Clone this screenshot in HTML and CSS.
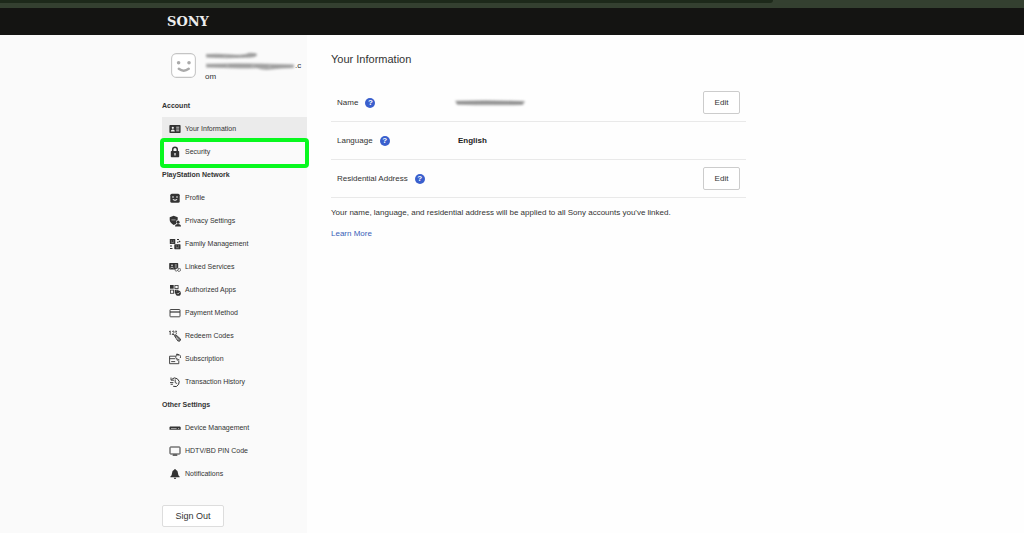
FILE: index.html
```html
<!DOCTYPE html>
<html lang="en">
<head>
<meta charset="utf-8">
<title>Your Information</title>
<meta name="viewport" content="width=device-width, initial-scale=1">
<link rel="stylesheet" href="styles.css">
</head>
<body>
<div class="browser-strip"><div class="browser-tab"></div></div>
<header class="top-bar"><a class="brand" href="#">SONY</a></header>
<div class="layout">
  <aside class="sidebar">
    <div class="user">
      <svg class="avatar" viewBox="0 0 24 24" aria-hidden="true"><rect x=".6" y=".6" width="22.8" height="22.8" rx="4.5" fill="#fff" stroke="#c4c4c4"/><circle cx="7.3" cy="9.4" r="1.7" fill="#aaa"/><circle cx="17.3" cy="9.4" r="1.7" fill="#aaa"/><path d="M7.500 15.200q4.700 3.600 9.500 0" fill="none" stroke="#aaa" stroke-width="2.400" stroke-linecap="round"/></svg>
      <div class="user-text">
        <svg class="smudge smudge-name" viewBox="0 0 54 8" aria-hidden="true"><path d="M1 2Q14 1.200 27 2.400T44 .800Q53 .600 52 3.200T40 5.800Q20 6.800 1 5.600Z" fill="#a8a8a8"/><path d="M3 3.800h15M22 4h12M36 4.200l14-1.400" stroke="#989898" stroke-width="1.400"/></svg>
        <div class="user-mail"><svg class="smudge smudge-mail" viewBox="0 0 90 8" aria-hidden="true"><path d="M1 1.800Q26 1 56 1.600T89 2.400V6Q76 6.400 67 7.600T52 6.200Q26 6.800 1 5.600Z" fill="#acacac"/><path d="M3 3.700h18M24 3.600h22M50 4h13M66 4.600h20" stroke="#989898" stroke-width="1.600"/></svg><span>.c</span></div>
        <div class="user-rest">om</div>
      </div>
    </div>
    <nav class="nav">
      <h2 class="nav-title">Account</h2>
      <a class="nav-item current" href="#"><svg class="icon" viewBox="0 0 12 12"><rect x=".4" y="2" width="11.2" height="8" rx=".8" fill="#333"/><circle cx="3.8" cy="4.8" r="1.1" fill="#eee"/><path d="M1.8 8.6q0-2.2 2-2.2t2 2.2z" fill="#eee"/><path d="M7.2 4.2h3M7.2 6h3M7.2 7.8h3" stroke="#eee" stroke-width=".8"/></svg>Your Information</a>
      <a class="nav-item marked" href="#"><svg class="icon" viewBox="0 0 12 12"><rect x="1.8" y="5" width="8.4" height="6.2" rx=".7" fill="#333"/><path d="M3.7 5.500V3.600a2.300 2.300 0 0 1 4.600 0v1.900" fill="none" stroke="#333" stroke-width="1.500"/><path d="M6 7v2.400" stroke="#fff" stroke-width="1.200"/></svg>Security</a>
      <h2 class="nav-title">PlayStation Network</h2>
      <a class="nav-item" href="#"><svg class="icon" viewBox="0 0 12 12"><rect x="1.3" y="1.8" width="9.400" height="9" rx="1.500" fill="#333"/><circle cx="4" cy="5" r=".8" fill="#fff"/><circle cx="8" cy="5" r=".8" fill="#fff"/><path d="M3.800 7.500q2.200 1.600 4.400 0" fill="none" stroke="#fff"/></svg>Profile</a>
      <a class="nav-item" href="#"><svg class="icon" viewBox="0 0 12 12"><path d="M4.700.800l4 1.400v2.600L7 6v3L4.700 10Q.700 7.600.700 5V2.200z" fill="#333"/><path d="M2.400 4.900h4.200" stroke="#ccc" stroke-width=".7"/><circle cx="9" cy="7.200" r="1.600" fill="#333"/><path d="M6 11.600q0-2.700 3-2.700t3 2.700z" fill="#333"/></svg>Privacy Settings</a>
      <a class="nav-item" href="#"><svg class="icon" viewBox="0 0 12 12"><rect x=".8" y="1" width="5.500" height="5" rx=".6" fill="#333"/><rect x="5.300" y="6.200" width="6.200" height="5" rx=".6" fill="#333"/><path d="M2 3h1M4 3h1M2.200 4.700h2.600M6.800 8h1M9 8h1M7 9.800h2.800" stroke="#aaa" stroke-width=".7"/><path d="M8 1.500h2M9.800 2.800l1.400 1.200M8 4.200h1.500M1 8h2M1 10.500h2.500" stroke="#333" stroke-width="1.100"/></svg>Family Management</a>
      <a class="nav-item" href="#"><svg class="icon" viewBox="0 0 12 12"><rect x=".2" y="2" width="9" height="6.500" rx=".7" fill="#333"/><circle cx="3" cy="4.200" r=".8" fill="#fff"/><path d="M1.500 7q1.500-2 3 0M5.800 4h2M5.800 6h2" fill="none" stroke="#fff" stroke-width=".7"/><g fill="#fafafa" stroke="#555" stroke-width=".8"><rect x="6.200" y="7.400" width="3.800" height="2.300" rx="1.100" transform="rotate(-30 8 9)"/><rect x="8.600" y="8" width="3.300" height="2.300" rx="1.100" transform="rotate(-30 10 9)"/></g></svg>Linked Services</a>
      <a class="nav-item" href="#"><svg class="icon" viewBox="0 0 12 12"><rect x="1" y="1" width="3.700" height="3.700" fill="#333"/><rect x="5.900" y="1.400" width="3.200" height="3.200" fill="none" stroke="#333" stroke-width=".8"/><rect x="1.400" y="6.100" width="3.200" height="3.200" fill="none" stroke="#333" stroke-width=".8"/><path d="M5.700 5.800h3.600v1H7v2.600H5.700z" fill="#333"/><circle cx="9.200" cy="9.200" r="2.600" fill="#333"/><path d="M8 9.200l.900.900 1.600-1.800" fill="none" stroke="#fff" stroke-width=".7"/></svg>Authorized Apps</a>
      <a class="nav-item" href="#"><svg class="icon" viewBox="0 0 12 12"><rect x="1" y="2.500" width="10" height="7.300" rx=".6" fill="none" stroke="#333" stroke-width=".9"/><path d="M1 5h10" stroke="#333" stroke-width="1.200"/></svg>Payment Method</a>
      <a class="nav-item" href="#"><svg class="icon" viewBox="0 0 12 12"><path d="M.2 1.700l1-.8v4M3.200 1.600q1-1 1.800-.3T3.200 4.500h2.200M6.200 1.200h1.400L6.800 2.400q1 .4.600 1.300" fill="none" stroke="#333" stroke-width=".9"/><path d="M5.300 5.500l1.500-.8 4.600 4.200q.6 1.600-1 2.300l-1.600-.3z" fill="#777" stroke="#333" stroke-width=".9"/><path d="M7 7.500l2.500 2.300" stroke="#fff" stroke-width=".7"/></svg>Redeem Codes</a>
      <a class="nav-item" href="#"><svg class="icon" viewBox="0 0 12 12"><path d="M6.800 3.200H.6v7.500h9.200V7.400" fill="none" stroke="#333" stroke-width=".9"/><path d="M.6 5.700h5.800M2.200 8.600h4" stroke="#333" stroke-width=".9"/><path d="M7.800 5.800A2.400 2.400 0 1 1 11.300 5M7 1.300h2v1.800M10.300 6.400L8 7.200V5.300" fill="none" stroke="#333" stroke-width=".9"/></svg>Subscription</a>
      <a class="nav-item" href="#"><svg class="icon" viewBox="0 0 12 12"><path d="M2.600 3.500A4.300 4.300 0 1 1 4.200 10.300" fill="none" stroke="#333"/><path d="M2 1.500v2.700h3M6.200 3.400v3.200l2 1M1 6.600h3.400M1.600 8.300h2.300" fill="none" stroke="#333" stroke-width=".9"/></svg>Transaction History</a>
      <h2 class="nav-title">Other Settings</h2>
      <a class="nav-item" href="#"><svg class="icon" viewBox="0 0 12 12"><path d="M1 4.600h10l.7.800v2.400H.5V5.400z" fill="#333"/><path d="M2 6.500h5.600M9 6.500h1.200" stroke="#ccc" stroke-width=".7"/></svg>Device Management</a>
      <a class="nav-item" href="#"><svg class="icon" viewBox="0 0 12 12"><rect x="1" y="2" width="10" height="7" rx=".5" fill="none" stroke="#333"/><path d="M4 9.500h4l.5 1.300h-5z" fill="#333"/></svg>HDTV/BD PIN Code</a>
      <a class="nav-item" href="#"><svg class="icon" viewBox="0 0 12 12"><path d="M6 1q.8 0 .8.800Q9 2.600 9 5.200q0 2.300 1.600 3.300v.8H1.400v-.8Q3 7.500 3 5.200q0-2.600 2.200-3.400Q5.200 1 6 1z" fill="#333"/><path d="M4.800 9.800h2.400q0 1.200-1.200 1.200t-1.200-1.200z" fill="#333"/></svg>Notifications</a>
    </nav>
    <button class="button sign-out" type="button">Sign Out</button>
  </aside>
  <main class="content">
    <h1 class="page-title">Your Information</h1>
    <dl class="info">
      <div class="info-row">
        <dt>Name <button class="help" type="button" aria-label="Help: name">?</button></dt>
        <dd><svg class="smudge smudge-value" viewBox="0 0 72 8" aria-hidden="true"><path d="M1 1.800Q34 .800 71 2L69 6Q36 6.800 3 5.800Z" fill="#a6a6a6"/><path d="M3 3.700Q32 3 68 3.800" fill="none" stroke="#8a8a8a" stroke-width="1.800"/></svg></dd>
        <button class="button edit" type="button" aria-label="Edit name">Edit</button>
      </div>
      <div class="info-row">
        <dt>Language <button class="help" type="button" aria-label="Help: language">?</button></dt>
        <dd>English</dd>
      </div>
      <div class="info-row">
        <dt>Residential Address <button class="help" type="button" aria-label="Help: residential address">?</button></dt>
        <dd></dd>
        <button class="button edit" type="button" aria-label="Edit residential address">Edit</button>
      </div>
    </dl>
    <p class="note">Your name, language, and residential address will be applied to all Sony accounts you've linked.</p>
    <a class="learn-more" href="#">Learn More</a>
  </main>
</div>
</body>
</html>
```
FILE: styles.css
```css
* { box-sizing: border-box; }
body {
  margin: 0;
  min-height: 100vh;
  display: flex;
  flex-direction: column;
  overflow-x: hidden;
  background: #fefefe;
  color: #333;
  font: 7px/12px "Liberation Sans", Arial, sans-serif;
}
h1, h2, p, dl, dd { margin: 0; }
a { color: inherit; text-decoration: none; }
button { font: inherit; color: inherit; padding: 0; cursor: pointer; }

.browser-strip { height: 8px; background: #344030; }
.browser-tab {
  width: 75.5%;
  height: 3px;
  background: #1d291a;
  border-bottom-right-radius: 3px;
}
.top-bar {
  height: 27px;
  padding-left: 167px;
  display: flex;
  align-items: center;
  background: #141412;
}
.brand { color: #eee; font: bold 13px/16px "DejaVu Serif", serif; }

.layout { flex: 1; display: flex; }
.sidebar {
  width: 307px;
  flex: none;
  padding: 15px 0 6px 162px;
  background: #fafafa;
}
.user { display: flex; gap: 9px; height: 44px; padding-left: 9px; }
.avatar { width: 25px; height: 25px; margin-top: 3px; }
.user-text { line-height: 10px; font-size: 8px; }
.smudge { display: block; height: 8px; filter: blur(1px); }
.smudge-name { width: 54px; margin-top: 2px; }
.user-mail { display: flex; align-items: center; height: 12px; }
.smudge-mail { width: 90px; }

.nav-title, .nav-item {
  height: 23px;
  display: flex;
  align-items: center;
}
.nav-title { font-size: 7px; font-weight: bold; }
.nav-item { position: relative; gap: 4px; padding-left: 7px; }
.nav-item.current { background: #ebebeb; }
.nav-item.marked::after {
  content: "";
  position: absolute;
  inset: -2px -2px -5px -2px;
  border: 4px solid #08f81e;
  border-radius: 4px;
  z-index: 1;
}
.icon { width: 12px; height: 12px; flex: none; }

.button { background: #fff; border: 1px solid #ccc; border-radius: 2px; }
.sign-out { width: 62px; height: 22px; margin-top: 20px; border-color: #ddd; font-size: 9px; }

.content { flex: 1; min-width: 0; padding: 16px 24px; }
.page-title { font-size: 11px; line-height: 16px; font-weight: normal; }
.info { width: 100%; max-width: 415px; margin-top: 17px; }
.info-row {
  height: 38px;
  display: flex;
  align-items: center;
  padding: 0 6px;
  border-bottom: 1px solid #e9e9e9;
  font-size: 8px;
}
.info dt { width: 117px; display: flex; align-items: center; gap: 7px; }
.info dd { flex: 1; padding-left: 4px; font-weight: bold; color: #222; }
.smudge-value { width: 72px; margin-left: -4px; }
.help {
  width: 10px;
  height: 10px;
  border: 0;
  border-radius: 50%;
  background: #3a5fcd;
  color: #fff;
  font-size: 8px;
  line-height: 10px;
  font-weight: bold;
}
.edit { width: 37px; height: 23px; font-size: 8px; }
.note { margin-top: 9px; font-size: 8px; }
.learn-more { display: inline-block; margin-top: 9px; color: #3a5fb8; font-size: 8px; }
```
